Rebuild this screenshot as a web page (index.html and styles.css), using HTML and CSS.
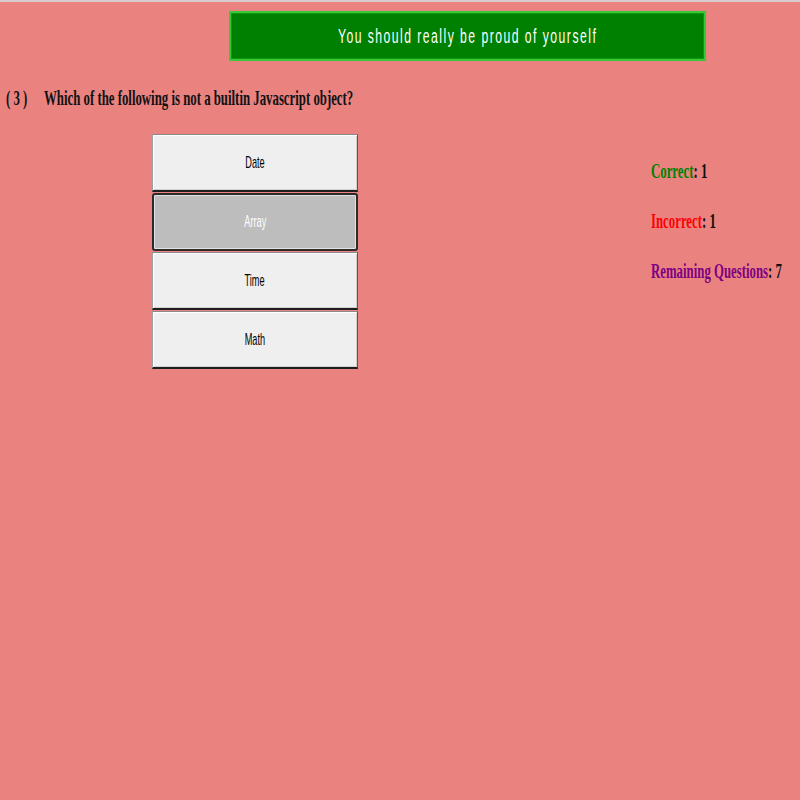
FILE: index.html
```html
<!DOCTYPE html>
<html lang="en">
<head>
<meta charset="utf-8">
<title>Quiz</title>
<link rel="stylesheet" href="styles.css">
</head>
<body>
<div class="topline"></div>
<div class="banner-row">
  <div class="banner"><span class="banner-text">You should really be proud of yourself</span></div>
</div>
<div class="question">
  <span class="qnum"><span class="sx">( 3 )</span></span>
  <span class="qtext sx">Which of the following is not a builtin Javascript object?</span>
</div>
<div class="content">
  <div class="options">
    <button class="opt"><span class="label">Date</span></button>
    <button class="opt selected"><span class="label">Array</span></button>
    <button class="opt"><span class="label">Time</span></button>
    <button class="opt"><span class="label">Math</span></button>
  </div>
  <div class="stats">
    <p class="stat"><span class="sx"><span class="k-correct">Correct</span>: 1</span></p>
    <p class="stat"><span class="sx"><span class="k-incorrect">Incorrect</span>: 1</span></p>
    <p class="stat"><span class="sx"><span class="k-remaining">Remaining Questions</span>: 7</span></p>
  </div>
</div>
</body>
</html>
```
FILE: styles.css
```css
html, body {
  margin: 0;
  height: 100%;
  overflow: hidden;
  background: #ea8380;
}
body {
  font-family: "Liberation Serif", "Times New Roman", serif;
}
.topline {
  height: 2px;
  background: #d8cccc;
}
.banner-row {
  padding-top: 9px;
  padding-left: 229px;
}
.banner {
  box-sizing: border-box;
  width: 477px;
  height: 50px;
  background: #008000;
  border: 2px solid #35c935;
  box-shadow: inset 0 0 0 1px #129612;
  display: flex;
  align-items: center;
  justify-content: center;
}
.banner-text {
  font-family: "Liberation Sans", Arial, sans-serif;
  font-size: 20px;
  letter-spacing: 2.4px;
  color: #fff;
  display: inline-block;
  white-space: nowrap;
  transform: scaleX(0.61);
}
.sx {
  display: inline-block;
  white-space: nowrap;
  transform: scaleX(0.61);
  transform-origin: 0 50%;
}
.question {
  display: flex;
  margin-top: 25px;
  padding-left: 6px;
  font-size: 21px;
  font-weight: bold;
  line-height: 24px;
  color: #111;
}
.qnum {
  width: 38px;
  flex: none;
}
.content {
  display: flex;
  margin-top: 24px;
}
.options {
  margin-left: 152px;
  width: 206px;
  flex: none;
  display: flex;
  flex-direction: column;
  gap: 1px;
}
.opt {
  box-sizing: border-box;
  width: 100%;
  height: 58px;
  margin: 0;
  padding: 0;
  background: #efefef;
  border-top: 1px solid #8a8a8a;
  border-left: 1px solid #a0a0a0;
  border-right: 1px solid #555;
  border-bottom: 2px solid #1e1e1e;
  box-shadow: inset 1px 1px 0 #fff, inset -1px -1px 0 #d0d0d0;
  font-family: "Liberation Sans", Arial, sans-serif;
  font-size: 17px;
  color: #000;
  display: flex;
  align-items: center;
  justify-content: center;
}
.opt.selected {
  background: #bdbdbd;
  border: 2px solid #2a2a2a;
  border-radius: 3px;
  box-shadow: inset 0 0 0 1px #e2e2e2;
  color: #fff;
}
.label {
  display: inline-block;
  white-space: nowrap;
  transform: scaleX(0.54);
}
.stats {
  margin-left: 293px;
  width: 149px;
  flex: none;
  overflow: hidden;
  padding-top: 25px;
  display: flex;
  flex-direction: column;
  gap: 26px;
}
.stat {
  margin: 0;
  font-size: 21px;
  font-weight: bold;
  line-height: 24px;
  color: #111;
}
.k-correct { color: #008000; }
.k-incorrect { color: #ff0000; }
.k-remaining { color: #800080; }
```
